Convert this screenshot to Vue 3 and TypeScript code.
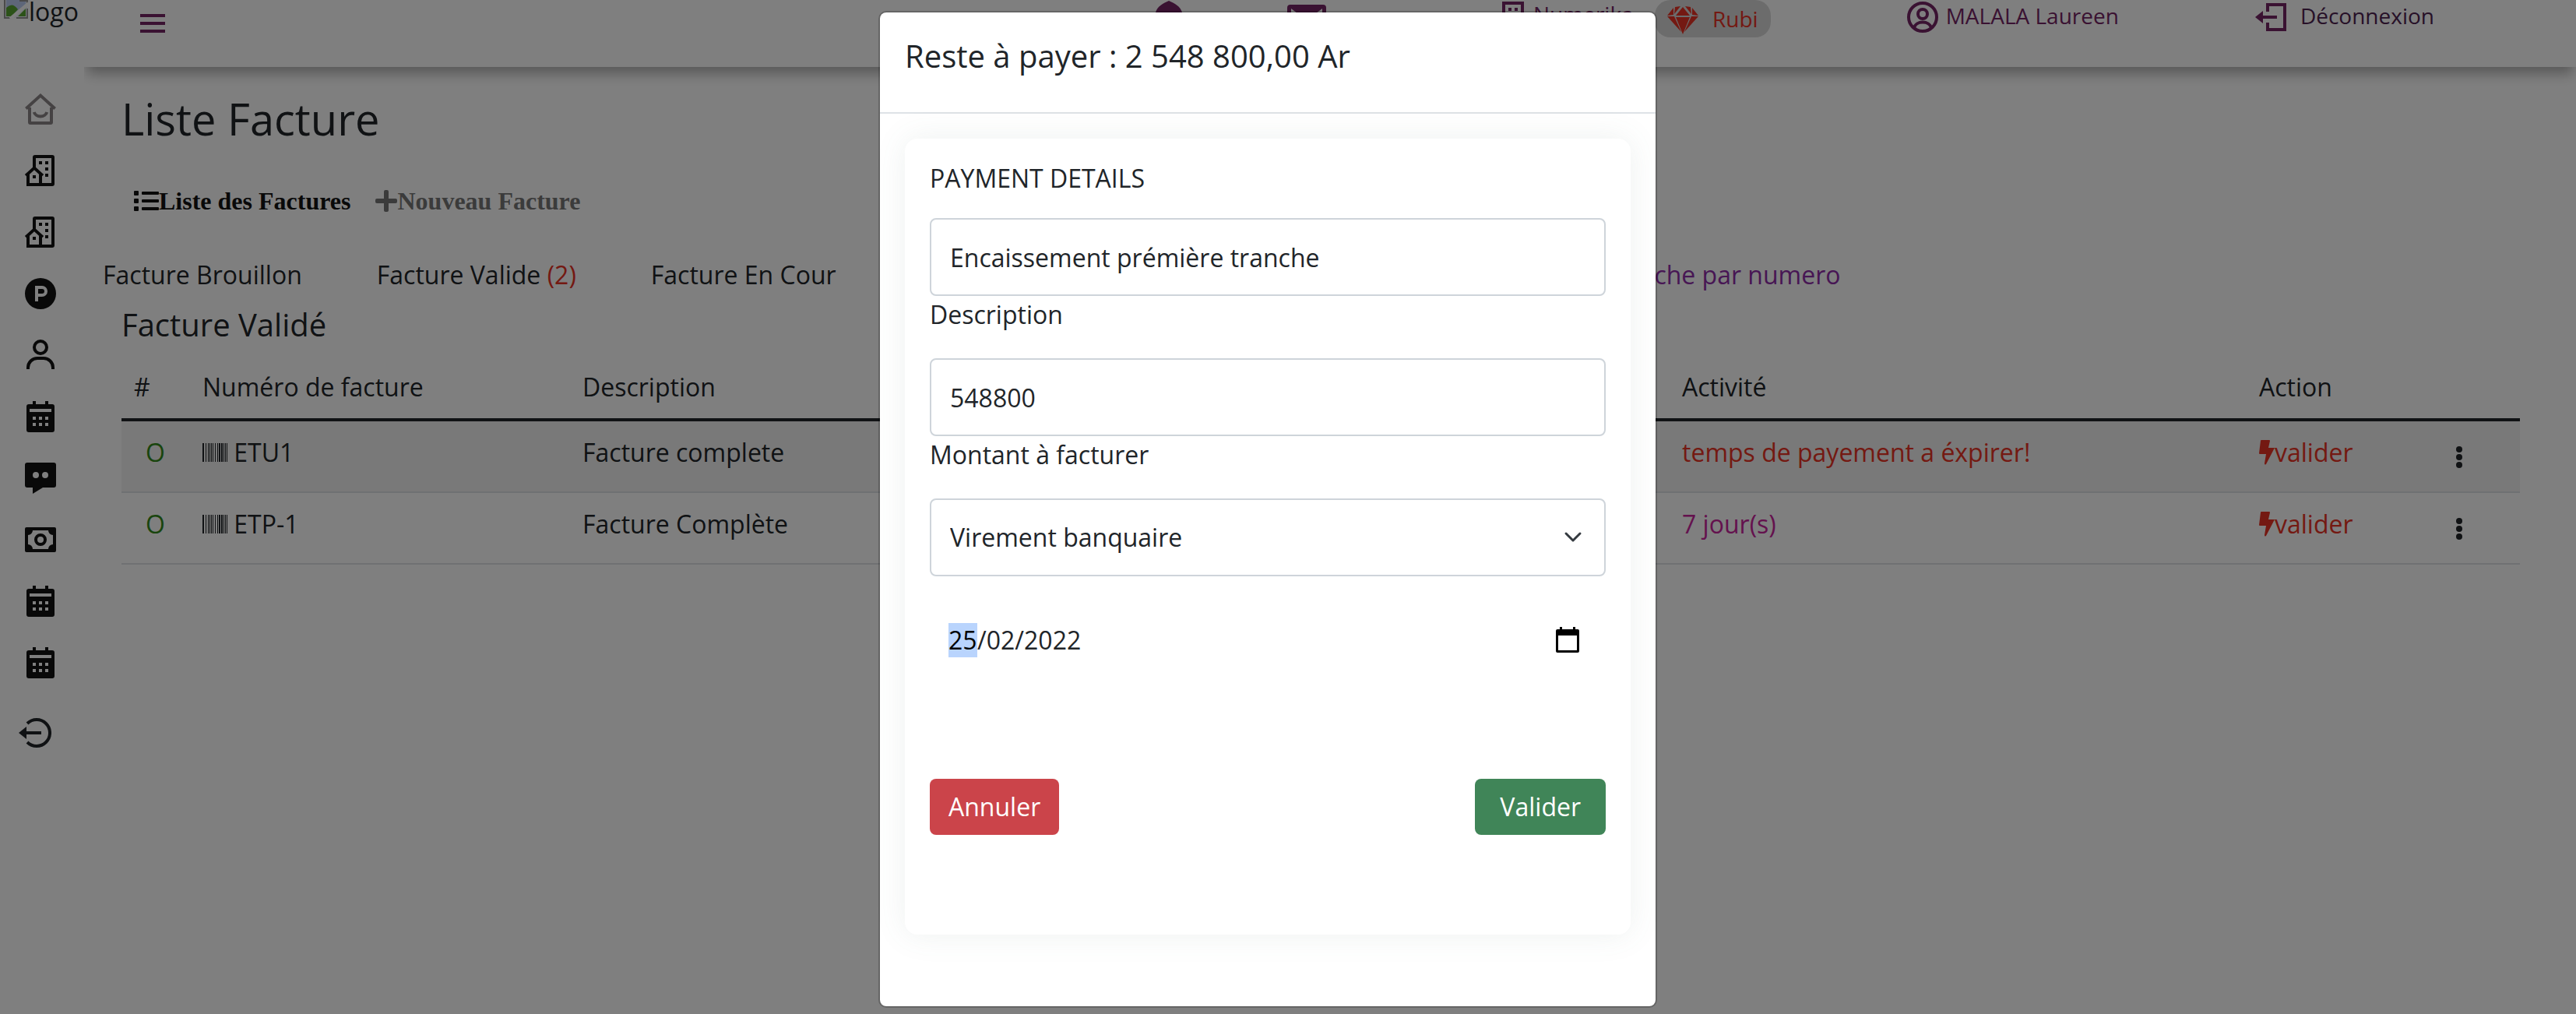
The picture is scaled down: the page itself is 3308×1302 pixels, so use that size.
<script setup lang="ts">
import { ref } from 'vue'

type IconName = 'home' | 'building' | 'parking' | 'user' | 'calendar' | 'message' | 'money'

interface IconShape {
  line?: string
  solid?: string
}

interface Invoice {
  id: number
  numero: string
  description: string
  activite: string
  tone: 'late' | 'soon'
}

const shapes: Record<IconName, IconShape> = {
  home: {
    line: 'M2.700 11.800L12 3.300l9.300 8.500M5 11v9.500q0 .5.5.5h13q.5 0 .5-.5V11M7.900 14a4.200 3.500 0 0 0 8.200 0',
  },
  building: {
    line: 'M8 10V3.500q0-.5.5-.5h11q.5 0 .5.5v17q0 .5-.5.5H4v-6.500M12 14.500V21M2.600 15.200L8 10.300l5.400 4.900',
    solid: 'M7 15h2v2H7zM11 6h2v2h-2zM15 6h2v2h-2zM15 10h2v2h-2zM15 14h2v2h-2z',
  },
  parking: {
    solid: 'M12 22a10 10 0 1 1 0-20 10 10 0 0 1 0 20zM8.500 7v10h2v-3H13a3.500 3.500 0 0 0 0-7zm2 2H13a1.500 1.500 0 0 1 0 3h-2.500z',
  },
  user: {
    line: 'M12 3a4 4 0 1 0 0 8 4 4 0 0 0 0-8zM4 21v-1a6 6 0 0 1 6-6h4a6 6 0 0 1 6 6v1',
  },
  calendar: {
    solid: 'M7 4V2h2v2h6V2h2v2h2.500A1.500 1.500 0 0 1 21 5.500v15a1.500 1.500 0 0 1-1.500 1.500h-15A1.500 1.500 0 0 1 3 20.500v-15A1.500 1.500 0 0 1 4.500 4zM5 7v2h14V7zm2 5v2h2v-2zm4 0v2h2v-2zm4 0v2h2v-2zm-8 4v2h2v-2zm4 0v2h2v-2zm4 0v2h2v-2z',
  },
  message: {
    solid: 'M3.500 2h17A1.500 1.500 0 0 1 22 3.500v13a1.500 1.500 0 0 1-1.500 1.500h-7L7 22v-4H3.500A1.500 1.500 0 0 1 2 16.500v-13A1.500 1.500 0 0 1 3.500 2zM9 8a2 2 0 1 0 0 4 2 2 0 0 0 0-4zm6 0a2 2 0 1 0 0 4 2 2 0 0 0 0-4z',
  },
  money: {
    solid: 'M3 4h18a1 1 0 0 1 1 1v14a1 1 0 0 1-1 1H3a1 1 0 0 1-1-1V5a1 1 0 0 1 1-1zm4 2a3 3 0 0 1-3 3v6a3 3 0 0 1 3 3h10a3 3 0 0 1 3-3V9a3 3 0 0 1-3-3zm5 2a4 4 0 1 1 0 8 4 4 0 0 1 0-8zm0 2a2 2 0 1 0 0 4 2 2 0 0 0 0-4z',
  },
}

const navigation: { icon: IconName; label: string }[] = [
  { icon: 'home', label: 'Accueil' },
  { icon: 'building', label: 'Société' },
  { icon: 'building', label: 'Agences' },
  { icon: 'parking', label: 'Produits' },
  { icon: 'user', label: 'Clients' },
  { icon: 'calendar', label: 'Calendrier' },
  { icon: 'message', label: 'Messages' },
  { icon: 'money', label: 'Factures' },
  { icon: 'calendar', label: 'Planning' },
  { icon: 'calendar', label: 'Agenda' },
]

const invoices: Invoice[] = [
  { id: 1, numero: 'ETU1', description: 'Facture complete', activite: 'temps de payement a éxpirer!', tone: 'late' },
  { id: 2, numero: 'ETP-1', description: 'Facture Complète', activite: '7 jour(s)', tone: 'soon' },
]

// [x, width] of each bar in the barcode glyph
const bars = [
  [0, 2], [4, 1], [7, 1], [9, 1], [11, 1], [13, 1], [16, 1], [19, 1], [21, 2], [24, 2], [27, 1], [29, 1], [31, 1],
]

const description = ref('Encaissement prémière tranche')
const amount = ref('548800')
const method = ref('Virement banquaire')
const day = ref('25')
</script>

<template>
  <div class="app">
    <aside class="sidebar">
      <a href="#" class="logo">
        <svg class="broken" viewBox="0 0 32 32" aria-hidden="true">
          <path d="M1 0h20l9 9v22H1z" fill="#eef2fb" />
          <path d="M3 0h18v8h7v8L10 29H3z" fill="#bccdf2" />
          <path d="M3 29V18q8-8 15 2l-8 9z" fill="#58a532" />
          <path d="M18 29l10-10v10z" fill="#58a532" />
          <path d="M1 0v31h9M30 19v12H16M30 13V9h-9V0" fill="none" stroke="#949494" stroke-width="2" />
          <path d="M8 32L32 12" stroke="#fff" stroke-width="4" />
        </svg><span>logo</span>
      </a>
      <nav class="nav">
        <a v-for="(item, i) in navigation" :key="i" href="#" :class="{ current: i === 0 }" :aria-label="item.label">
          <svg viewBox="0 0 24 24">
            <path v-if="shapes[item.icon].line" :d="shapes[item.icon].line" fill="none" stroke="currentColor" stroke-width="2" />
            <path v-if="shapes[item.icon].solid" :d="shapes[item.icon].solid" fill="currentColor" fill-rule="evenodd" />
          </svg>
        </a>
      </nav>
      <a href="#" class="leave" aria-label="Quitter">
        <svg viewBox="0 0 42 38" fill="none" stroke="currentColor" stroke-width="4">
          <path d="M11 7a17 17 0 1 1 0 24M8 19h21" />
          <path d="M10 11v16L0 19z" fill="currentColor" stroke="none" />
        </svg>
      </a>
    </aside>

    <div class="page">
      <header class="topbar">
        <button class="burger" type="button" aria-label="Menu"><i></i><i></i><i></i></button>
        <a href="#" class="bell" aria-label="Notifications">
          <svg viewBox="0 0 36 44"><path d="M18 1c7 3 15 7 17 15v14l1 6H0l1-6V16C3 8 11 4 18 1z" fill="currentColor" /></svg>
        </a>
        <a href="#" class="mail" aria-label="Messages">
          <svg viewBox="0 0 50 40"><path d="M4 0h42a4 4 0 0 1 4 4v32a4 4 0 0 1-4 4H4a4 4 0 0 1-4-4V4a4 4 0 0 1 4-4zm1 5v7l20 15 20-15V5L25 20z" fill="currentColor" fill-rule="evenodd" /></svg>
        </a>
        <a href="#" class="company">
          <svg viewBox="0 0 28 36"><path d="M2 2h24v32H2z" fill="none" stroke="currentColor" stroke-width="4" /><path d="M8 8h4v4H8zm8 0h4v4h-4zm-8 8h4v4H8zm8 0h4v4h-4z" fill="currentColor" /></svg>
          <span>Numerika</span>
        </a>
        <a href="#" class="badge">
          <svg viewBox="0 0 40 36" fill="currentColor">
            <path d="M10 1l7-1-8 10zM23 0l7 1 1 9zM20 1l9 11H11zM8 2v9l-8 1zM32 2l8 10-8-1zM0 13h9l9 20zM11 14h18l-9 22zM31 13h9L22 33z" />
          </svg>
          <span>Rubi</span>
        </a>
        <a href="#" class="account">
          <svg viewBox="0 0 40 40" fill="none" stroke="currentColor" stroke-width="4">
            <circle cx="20" cy="20" r="18" /><circle cx="20" cy="16" r="6" /><path d="M9 34c2-10 20-10 22 0" />
          </svg>
          <span>MALALA Laureen</span>
        </a>
        <a href="#" class="logout">
          <svg viewBox="0 0 40 36" fill="none" stroke="currentColor" stroke-width="4">
            <path d="M16 11V2h22v32H16v-9M8 18h20" /><path d="M10 10v16L0 18z" fill="currentColor" stroke="none" />
          </svg>
          <span>Déconnexion</span>
        </a>
      </header>

      <main class="content">
        <h1>Liste Facture</h1>
        <nav class="switcher">
          <a href="#" class="on">
            <svg viewBox="0 0 32 26" fill="currentColor"><rect width="6" height="6" rx="1" /><rect y="10" width="6" height="6" rx="1" /><rect y="20" width="6" height="6" rx="1" /><rect x="10" y="1" width="22" height="4" rx="1" /><rect x="10" y="11" width="22" height="4" rx="1" /><rect x="10" y="21" width="22" height="4" rx="1" /></svg><span>Liste des Factures</span>
          </a>
          <a href="#">
            <svg viewBox="0 0 28 28" class="plus" fill="currentColor"><rect x="11" width="6" height="28" rx="2" /><rect y="11" width="28" height="6" rx="2" /></svg><span>Nouveau Facture</span>
          </a>
        </nav>
        <nav class="filters">
          <a href="#">Facture Brouillon</a>
          <a href="#">Facture Valide <em>(2)</em></a>
          <a href="#">Facture En Cour</a>
          <a href="#" class="search">Recherche par numero</a>
        </nav>
        <h2>Facture Validé</h2>
        <table>
          <colgroup>
            <col class="c-id"><col class="c-num"><col class="c-desc"><col class="c-act"><col class="c-action"><col>
          </colgroup>
          <thead>
            <tr><th>#</th><th>Numéro de facture</th><th>Description</th><th>Activité</th><th>Action</th><th></th></tr>
          </thead>
          <tbody>
            <tr v-for="row in invoices" :key="row.id">
              <td class="state">O</td>
              <td>
                <svg class="barcode" viewBox="0 0 32 24" aria-hidden="true"><rect v-for="[x, w] in bars" :key="x" :x="x" y="0" :width="w" height="24" fill="currentColor" /></svg>
                {{ row.numero }}
              </td>
              <td>{{ row.description }}</td>
              <td :class="row.tone">{{ row.activite }}</td>
              <td>
                <a href="#" class="validate"><svg viewBox="0 0 20 32"><path d="M3 0h10q1 0 1 1l-2 9h8L9 31q-2 1.500-2-1l2-12H1q-1 0-1-1L2 1q0-1 1-1z" fill="currentColor" /></svg>valider</a>
              </td>
              <td>
                <button class="more" type="button" aria-label="Options"><i></i><i></i><i></i></button>
              </td>
            </tr>
          </tbody>
        </table>
      </main>
    </div>

    <div class="backdrop">
      <section class="modal" role="dialog" aria-labelledby="modal-title">
        <header class="modal-head"><h2 id="modal-title">Reste à payer : 2 548 800,00 Ar</h2></header>
        <div class="modal-body">
          <form class="card" @submit.prevent>
            <h3>PAYMENT DETAILS</h3>
            <div class="field">
              <input id="description" v-model="description" type="text">
              <label for="description">Description</label>
            </div>
            <div class="field">
              <input id="amount" v-model="amount" type="text">
              <label for="amount">Montant à facturer</label>
            </div>
            <div class="choice">
              <select v-model="method" aria-label="Mode de paiement">
                <option>Virement banquaire</option>
              </select>
              <svg viewBox="0 0 24 16" aria-hidden="true"><path d="M3 3l9 9 9-9" fill="none" stroke="#343a40" stroke-width="3" stroke-linecap="round" stroke-linejoin="round" /></svg>
            </div>
            <div class="date">
              <div class="parts">
                <input v-model="day" class="day" type="text" aria-label="Jour"><span>/02/2022</span>
              </div>
              <button type="button" aria-label="Ouvrir le calendrier">
                <svg viewBox="0 0 30 34"><path d="M5 0h3v3h14V0h3v3h3a2 2 0 0 1 2 2v26a2 2 0 0 1-2 2H2a2 2 0 0 1-2-2V5a2 2 0 0 1 2-2h3zM3 11v19h24V11z" fill="#000" fill-rule="evenodd" /></svg>
              </button>
            </div>
            <div class="actions">
              <button class="cancel" type="button">Annuler</button>
              <button class="confirm" type="submit">Valider</button>
            </div>
          </form>
        </div>
      </section>
    </div>
  </div>
</template>

<style>
body {
  background: #fff;
}
</style>

<style scoped>
* {
  box-sizing: border-box;
}
.app {
  position: relative;
  display: flex;
  min-height: 100vh;
  overflow: hidden;
  color: #212529;
  font: 32px/48px "Open Sans", "Noto Sans", sans-serif;
}
a {
  color: inherit;
  text-decoration: none;
}
button {
  padding: 0;
  border: 0;
  background: none;
  color: inherit;
  font: inherit;
}
h1, h2, h3 {
  margin: 0;
  font-weight: 400;
}
svg {
  flex: none;
}
.sidebar {
  position: relative;
  z-index: 1;
  display: flex;
  flex-direction: column;
  flex: none;
  width: 108px;
  background: #fff;
}
.logo {
  display: flex;
  height: 100px;
  margin-left: 5px;
  line-height: 30px;
}
.broken {
  width: 32px;
  height: 32px;
  margin-top: -8px;
}
.nav {
  display: flex;
  flex-direction: column;
  gap: 31px;
  padding: 16px 0 0 28px;
  color: #131313;
}
.nav a {
  height: 48px;
}
.nav svg {
  display: block;
  width: 48px;
  height: 48px;
}
.nav .current {
  color: #8a8587;
}
.leave {
  margin: 47px 0 0 24px;
}
.leave svg {
  display: block;
  width: 42px;
  height: 38px;
}
.page {
  flex: 1;
  min-width: 0;
}
.topbar {
  display: flex;
  align-items: flex-start;
  height: 86px;
  padding: 0 182px 0 72px;
  box-shadow: 0 12px 16px -4px rgba(0, 0, 0, 0.32);
  color: #742465;
  font-size: 28px;
  white-space: nowrap;
}
.topbar a {
  display: flex;
}
.topbar svg {
  display: block;
}
.burger {
  display: grid;
  gap: 6px;
  width: 32px;
  margin-top: 18px;
}
.burger i {
  height: 4px;
  background: currentColor;
}
.topbar .bell {
  margin-left: auto;
}
.bell svg {
  width: 36px;
  height: 44px;
}
.mail {
  margin: 6px 0 0 134px;
}
.mail svg {
  width: 50px;
  height: 40px;
}
.company {
  gap: 12px;
  width: 196px;
  margin: 2px 0 0 226px;
}
.account span {
  margin-top: -6px;
}
.company span, .logout span {
  margin-top: -8px;
}
.company svg {
  width: 28px;
  height: 36px;
}
.badge {
  align-items: center;
  gap: 18px;
  height: 48px;
  padding: 0 16px;
  border-radius: 20px;
  background: #d9d9d9;
  color: #e83325;
}
.badge svg {
  width: 40px;
  height: 36px;
  margin-top: 4px;
}
.account {
  gap: 10px;
  margin: 2px 0 0 175px;
}
.account svg {
  width: 40px;
  height: 40px;
}
.logout {
  gap: 18px;
  margin: 4px 0 0 175px;
}
.logout span {
  color: #4e2350;
}
.logout svg {
  width: 40px;
  height: 36px;
}
.content {
  padding: 32px 72px 0 48px;
}
h1 {
  font-size: 56px;
  line-height: 68px;
}
.switcher {
  display: flex;
  gap: 32px;
  margin-top: 48px;
  padding-left: 16px;
  color: #777;
  font: bold 32px/48px "Liberation Serif", serif;
}
.switcher a {
  display: flex;
  align-items: center;
}
.switcher .on {
  color: #131313;
}
.switcher svg {
  width: 32px;
  height: 26px;
}
.switcher .plus {
  width: 28px;
  height: 28px;
}
.filters {
  display: flex;
  gap: 96px;
  margin: 47px 0 0 -24px;
}
.filters em {
  color: #e83325;
  font-style: normal;
}
.filters .search {
  margin-left: 851px;
  color: #8f2da8;
}
h2 {
  font-size: 40px;
  line-height: 48px;
}
.content h2 {
  margin: 16px 0;
}
table {
  width: 100%;
  table-layout: fixed;
  border-collapse: separate;
  border-spacing: 0;
}
.c-id { width: 88px; }
.c-num { width: 488px; }
.c-desc { width: 1412px; }
.c-act { width: 741px; }
.c-action { width: 236px; }
th, td {
  height: 92px;
  padding: 16px;
  border-bottom: 2px solid #dee2e6;
  font-weight: 400;
  line-height: 48px;
  text-align: left;
  vertical-align: top;
  white-space: nowrap;
}
th {
  height: 84px;
  border-bottom: 4px solid #212529;
}
tbody tr:first-child {
  background: #f2f2f2;
}
.state {
  padding-left: 31px;
  color: #338a1a;
}
.barcode {
  width: 32px;
  height: 24px;
}
.late, .validate {
  color: #e83325;
}
.soon {
  color: #c9249c;
}
.validate {
  display: flex;
}
.validate svg {
  width: 20px;
  height: 32px;
  margin-top: 8px;
}
.more {
  display: grid;
  gap: 2px;
  margin: 16px 0 0 17px;
}
.more i {
  width: 8px;
  height: 8px;
  border-radius: 50%;
  background: #212529;
}
.backdrop {
  position: absolute;
  z-index: 2;
  inset: 0;
  display: flex;
  align-items: flex-start;
  justify-content: center;
  padding-top: 14px;
  background: rgba(0, 0, 0, 0.5);
}
.modal {
  width: 1000px;
  margin-right: 52px;
  border: 2px solid rgba(0, 0, 0, 0.2);
  border-radius: 10px;
  background: #fff;
  background-clip: padding-box;
}
.modal-head {
  padding: 32px 32px 48px;
  border-bottom: 2px solid #dee2e6;
}
.modal-body {
  padding: 32px 32px 92px;
}
.card {
  padding: 27px 32px 128px;
  border-radius: 16px;
  background: #fff;
  box-shadow: 0 0 40px rgba(90, 120, 110, 0.1);
}
h3 {
  margin-bottom: 27px;
  font-size: 32px;
  line-height: 48px;
}
.field {
  margin-bottom: 32px;
}
.field input, .choice select {
  display: block;
  width: 100%;
  height: 100px;
  padding: 0 24px;
  border: 2px solid #ced4da;
  border-radius: 8px;
  background: #fff;
  color: inherit;
  font: inherit;
}
.field label {
  display: block;
}
.choice {
  display: grid;
  align-items: center;
}
.choice select, .choice svg {
  grid-area: 1 / 1;
}
.choice select {
  appearance: none;
}
.choice svg {
  justify-self: end;
  width: 24px;
  height: 16px;
  margin-right: 30px;
  pointer-events: none;
}
.date {
  display: flex;
  align-items: center;
  justify-content: space-between;
  margin-top: 58px;
  padding: 0 34px 0 24px;
}
.parts {
  display: flex;
  align-items: center;
}
.day {
  width: 37px;
  height: 44px;
  padding: 0;
  border: 0;
  background: #b9d4fd;
  color: #000;
  font: inherit;
}
.date svg {
  display: block;
  width: 30px;
  height: 34px;
}
.actions {
  display: flex;
  justify-content: space-between;
  margin-top: 154px;
  color: #fff;
}
.actions button {
  height: 72px;
  padding: 0 24px;
  border-radius: 8px;
}
.actions .cancel {
  background: #cb444a;
}
.actions .confirm {
  padding: 0 32px;
  background: #408558;
}
</style>
